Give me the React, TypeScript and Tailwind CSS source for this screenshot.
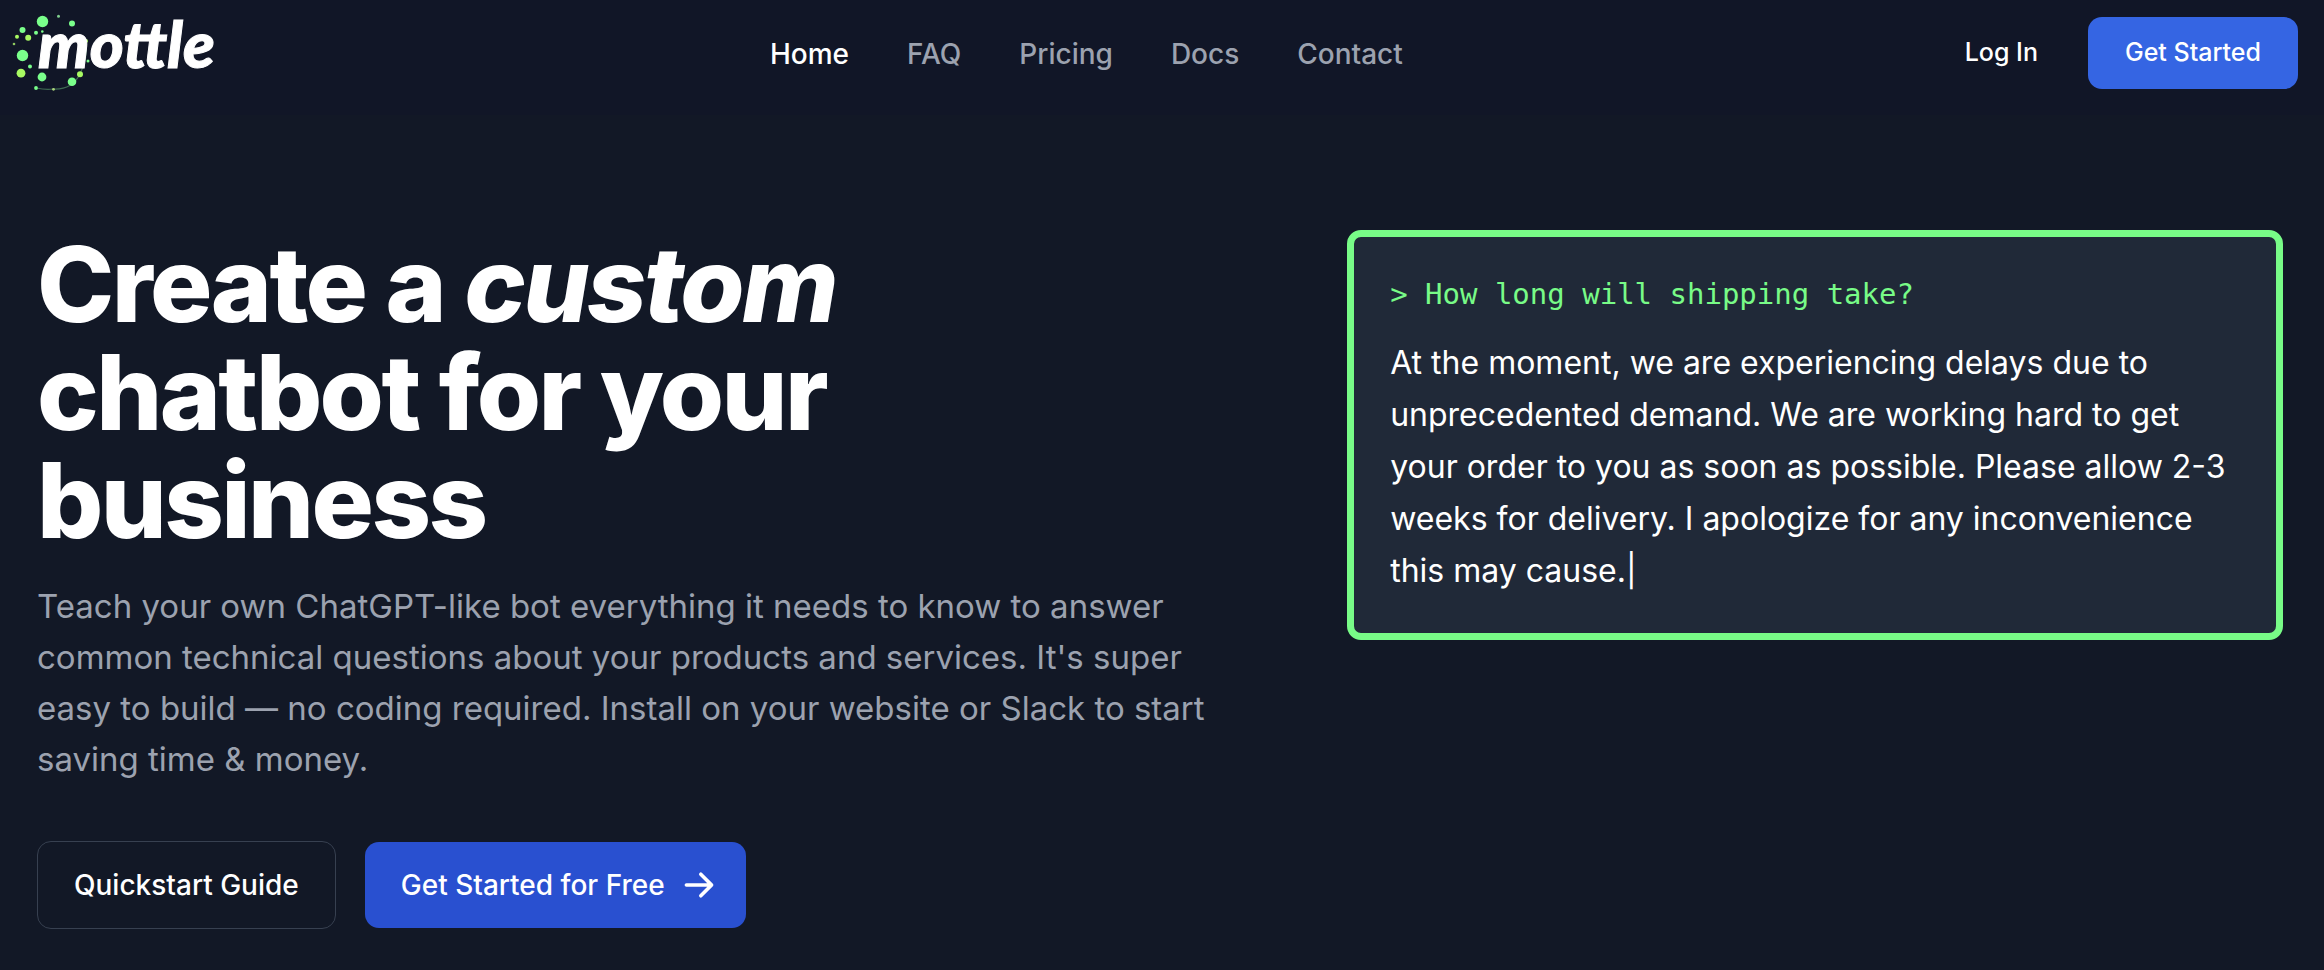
type Dot = [x: number, y: number, r: number, color: string];

const GREEN = "#7aff8b";
const LIME = "#a8fa62";

const DOTS: Dot[] = [
  [42.5, 21.5, 5.7, GREEN],
  [58.5, 16.3, 1.5, "#7fce8d"],
  [72, 23.5, 3, GREEN],
  [22.5, 30, 3, GREEN],
  [36, 32.7, 2, GREEN],
  [42.3, 31.5, 1.3, GREEN],
  [17, 36.8, 2, LIME],
  [28.2, 37.7, 3, LIME],
  [14, 44, 1.3, "#8fc95f"],
  [22.5, 55.5, 5.7, GREEN],
  [30, 66.5, 2, GREEN],
  [21, 73.2, 4.4, LIME],
  [42, 77, 4.4, GREEN],
  [36, 88, 1.9, GREEN],
  [53.5, 89.3, 1.4, "#a9d27b"],
  [72, 81.8, 4.3, GREEN],
  [80, 74.3, 3, LIME],
  [86, 41, 2, LIME],
  [88, 61, 1.5, GREEN],
];

const NAV = ["Home", "FAQ", "Pricing", "Docs", "Contact"];

function Logo() {
  return (
    <a href="#home" aria-label="mottle" className="block">
      <svg viewBox="0 0 233 106" className="h-[106px] w-[233px]" aria-hidden="true">
        <path d="M86 42 Q88 58 80 74 T53 89 Q46 90 36 88" fill="none" stroke="#3f6b52" strokeWidth="1.2" />
        {DOTS.map(([x, y, r, color]) => (
          <circle key={`${x}-${y}`} cx={x} cy={y} r={r} fill={color} />
        ))}
        <text
          x="38"
          y="68"
          fontFamily="Lato, sans-serif"
          fontSize="65"
          fontWeight="900"
          fontStyle="italic"
          fill="#fff"
          stroke="#fff"
          strokeWidth="1"
        >
          mottle
        </text>
      </svg>
    </a>
  );
}

function ArrowIcon() {
  return (
    <svg viewBox="0 0 20 20" fill="currentColor" className="-mr-[7px] ml-4 size-9" aria-hidden="true">
      <path
        fillRule="evenodd"
        clipRule="evenodd"
        d="M10.293 3.293a1 1 0 011.414 0l6 6a1 1 0 010 1.414l-6 6a1 1 0 01-1.414-1.414L14.586 11H3a1 1 0 110-2h11.586l-4.293-4.293a1 1 0 010-1.414z"
      />
    </svg>
  );
}

export default function App() {
  return (
    <div className="min-h-screen bg-[#121826] font-['Inter',sans-serif] text-white antialiased">
      <header className="flex h-[115px] items-start justify-between bg-[#111627] pr-[26px]">
        <Logo />
        <nav className="flex h-[107px] items-center gap-[58px] text-[28px] font-medium">
          {NAV.map((item) => (
            <a key={item} href={`#${item.toLowerCase()}`} className={item === "Home" ? "text-white" : "text-[#9ca2af]"}>
              {item}
            </a>
          ))}
        </nav>
        <div className="flex h-[106px] items-center gap-[25px] text-[25px] font-medium">
          <a href="#login" className="px-[25px]">
            Log In
          </a>
          <button type="button" className="h-[72px] rounded-[14px] bg-[#3565e3] px-[37px]">
            Get Started
          </button>
        </div>
      </header>
      <main className="grid grid-cols-12 pt-[115px] pr-[41px] pl-[37px]">
        <section className="col-span-7">
          <h1 className="max-w-[900px] text-[104px] leading-[108px] font-extrabold tracking-tight">
            Create a <em>custom</em> chatbot for your business
          </h1>
          <p className="mt-[27px] max-w-[1200px] text-[33px] leading-[51px] text-[#9ca2af]">
            Teach your own ChatGPT-like bot everything it needs to know to answer common technical questions about your
            products and services. It's super easy to build — no coding required. Install on your website or Slack to
            start saving time &amp; money.
          </p>
          <div className="mt-14 flex items-center gap-[29px] text-[28px] font-medium">
            <button type="button" className="h-[88px] rounded-[14px] border border-[#374050] px-9">
              Quickstart Guide
            </button>
            <button type="button" className="flex h-[86px] items-center rounded-[14px] bg-[#2950d0] px-9">
              Get Started for Free
              <ArrowIcon />
            </button>
          </div>
        </section>
        <section className="col-span-5">
          <div className="rounded-[14px] border-[7px] border-[#78fb87] bg-[#202938] p-9">
            <p className="font-['DejaVu_Sans_Mono',monospace] text-[29px] leading-[42px] text-[#78fb87]">
              &gt; How long will shipping take?
            </p>
            <p className="mt-[22px] text-[32px] leading-[52px]">
              At the moment, we are experiencing delays due to unprecedented demand. We are working hard to get your
              order to you as soon as possible. Please allow 2-3 weeks for delivery. I apologize for any inconvenience
              this may cause.|
            </p>
          </div>
        </section>
      </main>
    </div>
  );
}
